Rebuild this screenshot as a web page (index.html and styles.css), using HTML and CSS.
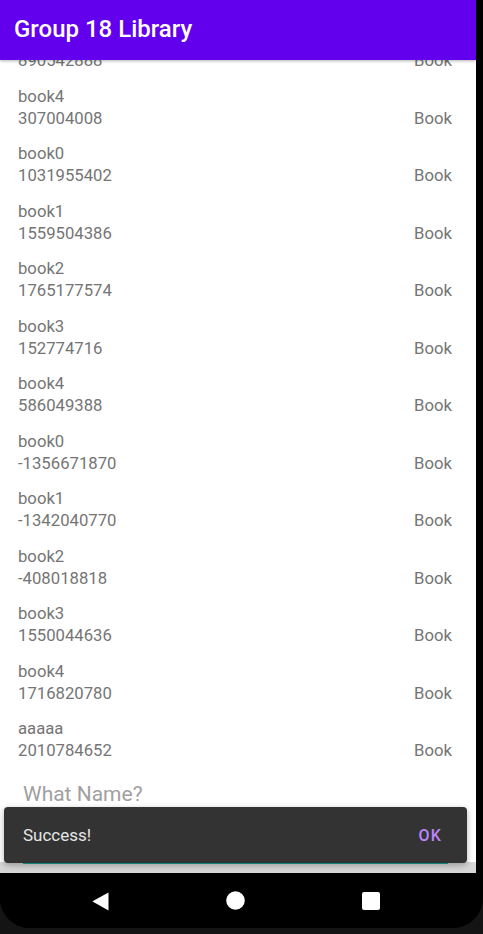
FILE: index.html
```html
<!DOCTYPE html>
<html>
<head>
<meta charset="utf-8">
<link rel="stylesheet" href="styles.css">
</head>
<body>
<div class="device">
  <div class="screen">
    <header class="appbar">Group 18 Library</header>
    <main class="content">
      <ul class="list">
        <li class="row"><div class="info"><span>book3</span><span>890542888</span></div><span class="type">Book</span></li>
        <li class="row"><div class="info"><span>book4</span><span>307004008</span></div><span class="type">Book</span></li>
        <li class="row"><div class="info"><span>book0</span><span>1031955402</span></div><span class="type">Book</span></li>
        <li class="row"><div class="info"><span>book1</span><span>1559504386</span></div><span class="type">Book</span></li>
        <li class="row"><div class="info"><span>book2</span><span>1765177574</span></div><span class="type">Book</span></li>
        <li class="row"><div class="info"><span>book3</span><span>152774716</span></div><span class="type">Book</span></li>
        <li class="row"><div class="info"><span>book4</span><span>586049388</span></div><span class="type">Book</span></li>
        <li class="row"><div class="info"><span>book0</span><span>-1356671870</span></div><span class="type">Book</span></li>
        <li class="row"><div class="info"><span>book1</span><span>-1342040770</span></div><span class="type">Book</span></li>
        <li class="row"><div class="info"><span>book2</span><span>-408018818</span></div><span class="type">Book</span></li>
        <li class="row"><div class="info"><span>book3</span><span>1550044636</span></div><span class="type">Book</span></li>
        <li class="row"><div class="info"><span>book4</span><span>1716820780</span></div><span class="type">Book</span></li>
        <li class="row"><div class="info"><span>aaaaa</span><span>2010784652</span></div><span class="type">Book</span></li>
      </ul>
      <div class="field">
        <div class="hint">What Name?</div>
      </div>
      <div class="band"></div>
      <div class="snackbar">
        <span class="snack-text">Success!</span>
        <span class="snack-action">OK</span>
      </div>
    </main>
    <nav class="navbar">
      <svg width="18" height="19" viewBox="0 0 18 19"><path d="M16.5 0.5 L16.5 18.5 L1 9.8 Q0 9.5 1 9 Z" fill="#fff"/></svg>
      <svg width="19" height="19" viewBox="0 0 19 19"><circle cx="9.5" cy="9.5" r="9.3" fill="#fff"/></svg>
      <svg width="18" height="18" viewBox="0 0 18 18"><rect x="0" y="0" width="18" height="18" rx="2" fill="#fff"/></svg>
    </nav>
  </div>
</div>
</body>
</html>
```

FILE: styles.css
```css
* { box-sizing: border-box; }
html, body {
  margin: 0;
  padding: 0;
  background: #141414;
  width: 483px;
  height: 934px;
  overflow: hidden;
  font-family: Roboto, "Noto Sans", sans-serif;
}
.device {
  width: 483px;
  height: 934px;
  display: flex;
  background: #141414;
}
.screen {
  width: 476px;
  height: 928px;
  background: #000;
  border-bottom-left-radius: 30px;
  border-bottom-right-radius: 30px;
  display: flex;
  flex-direction: column;
  overflow: hidden;
  box-shadow: 7px 0 0 #000;
}
.appbar {
  height: 60px;
  flex: none;
  background: #6200ee;
  color: #fff;
  font-size: 24px;
  font-weight: 500;
  padding-left: 14px;
  display: flex;
  align-items: center;
  padding-bottom: 3px;
  position: relative;
  z-index: 2;
  box-shadow: 0 1px 3px rgba(0,0,0,0.3);
}
.content {
  height: 813px;
  flex: none;
  background: #fff;
  position: relative;
  overflow: hidden;
  display: flex;
  flex-direction: column;
}
.list {
  list-style: none;
  margin: -38.5px 0 0 0;
  padding: 0;
}
.row {
  height: 57.5px;
  padding: 6.75px 24px 6.75px 18px;
  display: flex;
  align-items: flex-end;
  justify-content: space-between;
  color: #757575;
  font-size: 16.7px;
}
.info {
  display: flex;
  flex-direction: column;
}
.info span, .type {
  line-height: 22px;
  height: 22px;
}
.field {
  padding: 12px 0 0 23px;
}
.hint {
  color: #a0a0a0;
  font-size: 21px;
  line-height: 26px;
}
.band {
  margin-top: auto;
  flex: none;
  height: 11px;
  background: #d6d6d6;
  position: relative;
}
.band::before {
  content: "";
  position: absolute;
  left: 23px;
  right: 28px;
  top: 0;
  height: 2px;
  background: #14a89a;
}
.snackbar {
  position: absolute;
  left: 4px;
  top: 747px;
  width: 463px;
  height: 56px;
  background: #333333;
  border-radius: 4px;
  box-shadow: 0 2px 6px rgba(0,0,0,0.3);
  display: flex;
  align-items: center;
  justify-content: space-between;
  padding: 0 25px 0 19px;
}
.snack-text {
  color: #e6e6e6;
  font-size: 17px;
}
.snack-action {
  color: #bb86fc;
  font-size: 16px;
  font-weight: 500;
  letter-spacing: 1.2px;
}
.navbar {
  flex: 1;
  background: #000;
  display: flex;
  align-items: center;
  padding: 0 0 0 92px;
}
.navbar svg:nth-child(1) { margin-top: 1px; }
.navbar svg:nth-child(2) { margin-left: 116px; }
.navbar svg:nth-child(3) { margin-left: 117px; }
```
